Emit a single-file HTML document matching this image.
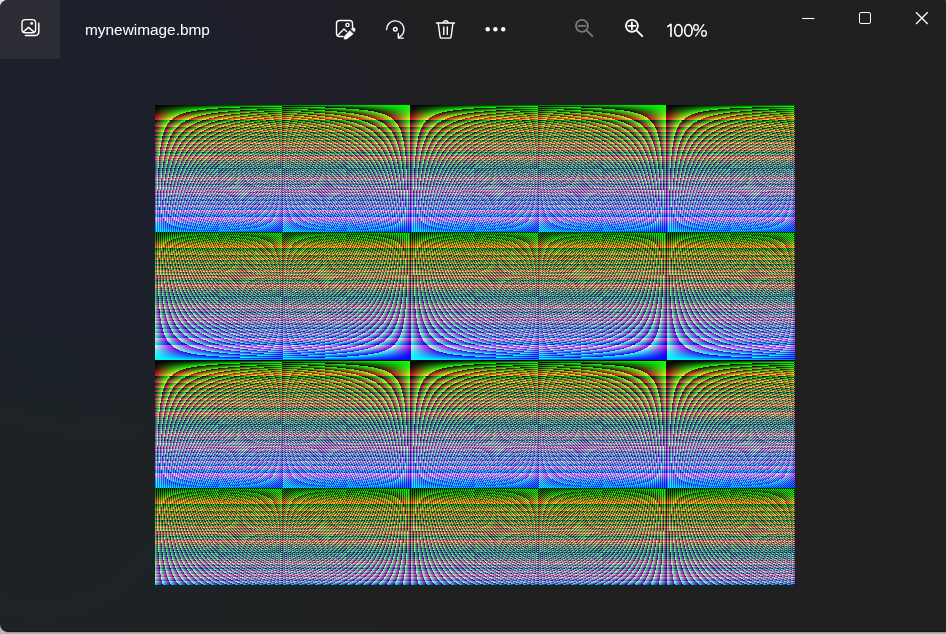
<!DOCTYPE html>
<html>
<head>
<meta charset="utf-8">
<style>
html,body{margin:0;padding:0;}
body{width:946px;height:634px;overflow:hidden;position:relative;background:#b5b5b5;font-family:"Liberation Sans",sans-serif;}
#win{position:absolute;left:0;top:0;width:952px;height:631px;border-radius:8px;overflow:hidden;border-bottom:1px solid #18191a;
  background:radial-gradient(ellipse 360px 330px at 120px 120px, rgba(24,22,78,0.21) 0%, rgba(24,22,78,0.16) 60%, rgba(24,22,78,0) 100%), radial-gradient(ellipse 400px 560px at 40px 380px, rgba(12,52,66,0.17) 0%, rgba(12,52,66,0.11) 55%, rgba(12,52,66,0) 100%), #202020;}
#shadowline{position:absolute;left:6px;top:632px;width:946px;height:1px;background:#9c9c9c;}
#btn{position:absolute;left:0;top:0;width:60px;height:59px;background:#2c2d34;}
#title{position:absolute;left:85px;top:20px;font-size:15.4px;will-change:transform;color:#fff;white-space:nowrap;line-height:20px;}
#zoomtxt{position:absolute;left:666px;top:19px;font-size:18.5px;color:#fff;white-space:nowrap;line-height:24px;transform-origin:0 0;transform:scaleX(0.85);will-change:transform;}
#pat{position:absolute;left:155px;top:105px;width:640px;height:480px;}
#pat canvas{position:absolute;left:0;top:0;}
#fallback{position:absolute;left:0;top:0;width:640px;height:480px;}
#fallback i{display:block;width:640px;height:1px;background-blend-mode:lighten;}
svg{position:absolute;left:0;top:0;}
</style>
</head>
<body>
<div id="shadowline"></div>
<div style="position:absolute;left:0;top:0;width:10px;height:10px;background:#dedede"></div>
<div id="win">
  <div id="btn"></div>
  <div id="title">mynewimage.bmp</div>
    <div id="pat"><div id="fallback">
<i style="background:repeating-linear-gradient(90deg,#000 -0.88400px,#0f0 254.11600px,#0f0 255.11600px),rgb(1,0,2)"></i>
<i style="background:repeating-linear-gradient(90deg,#000 -0.69200px,#0f0 126.80800px,#0f0 127.30800px),rgb(4,0,4)"></i>
<i style="background:repeating-linear-gradient(90deg,#000 -0.62800px,#0f0 84.37200px,#0f0 84.70533px),rgb(9,0,6)"></i>
<i style="background:repeating-linear-gradient(90deg,#000 -0.59600px,#0f0 63.15400px,#0f0 63.40400px),rgb(16,0,8)"></i>
<i style="background:repeating-linear-gradient(90deg,#000 -0.57680px,#0f0 50.42320px,#0f0 50.62320px),rgb(25,0,10)"></i>
<i style="background:repeating-linear-gradient(90deg,#000 -0.56400px,#0f0 41.93600px,#0f0 42.10267px),rgb(36,0,12)"></i>
<i style="background:repeating-linear-gradient(90deg,#000 -0.55486px,#0f0 35.87371px,#0f0 36.01657px),rgb(49,0,14)"></i>
<i style="background:repeating-linear-gradient(90deg,#000 -0.54800px,#0f0 31.32700px,#0f0 31.45200px),rgb(64,0,16)"></i>
<i style="background:repeating-linear-gradient(90deg,#000 -0.54267px,#0f0 27.79067px,#0f0 27.90178px),rgb(81,0,18)"></i>
<i style="background:repeating-linear-gradient(90deg,#000 -0.53840px,#0f0 24.96160px,#0f0 25.06160px),rgb(100,0,20)"></i>
<i style="background:repeating-linear-gradient(90deg,#000 -0.53491px,#0f0 22.64691px,#0f0 22.73782px),rgb(121,0,22)"></i>
<i style="background:repeating-linear-gradient(90deg,#000 -0.53200px,#0f0 20.71800px,#0f0 20.80133px),rgb(144,0,24)"></i>
<i style="background:repeating-linear-gradient(90deg,#000 -0.52954px,#0f0 19.08585px,#0f0 19.16277px),rgb(169,0,26)"></i>
<i style="background:repeating-linear-gradient(90deg,#000 -0.52743px,#0f0 17.68686px,#0f0 17.75829px),rgb(196,0,28)"></i>
<i style="background:repeating-linear-gradient(90deg,#000 -0.52560px,#0f0 16.47440px,#0f0 16.54107px),rgb(225,0,30)"></i>
<i style="background:repeating-linear-gradient(90deg,#000 -0.52400px,#0f0 15.41350px,#0f0 15.47600px),rgb(0,0,32)"></i>
<i style="background:repeating-linear-gradient(90deg,#000 -0.52259px,#0f0 14.47741px,#0f0 14.53624px),rgb(33,0,34)"></i>
<i style="background:repeating-linear-gradient(90deg,#000 -0.52133px,#0f0 13.64533px,#0f0 13.70089px),rgb(68,0,36)"></i>
<i style="background:repeating-linear-gradient(90deg,#000 -0.52021px,#0f0 12.90084px,#0f0 12.95347px),rgb(105,0,38)"></i>
<i style="background:repeating-linear-gradient(90deg,#000 -0.51920px,#0f0 12.23080px,#0f0 12.28080px),rgb(144,0,40)"></i>
<i style="background:repeating-linear-gradient(90deg,#000 -0.51829px,#0f0 11.62457px,#0f0 11.67219px),rgb(185,0,42)"></i>
<i style="background:repeating-linear-gradient(90deg,#000 -0.51745px,#0f0 11.07345px,#0f0 11.11891px),rgb(228,0,44)"></i>
<i style="background:repeating-linear-gradient(90deg,#000 -0.51670px,#0f0 10.57026px,#0f0 10.61374px),rgb(17,0,46)"></i>
<i style="background:repeating-linear-gradient(90deg,#000 -0.51600px,#0f0 10.10900px,#0f0 10.15067px),rgb(64,0,48)"></i>
<i style="background:repeating-linear-gradient(90deg,#000 -0.51536px,#0f0 9.68464px,#0f0 9.72464px),rgb(113,0,50)"></i>
<i style="background:repeating-linear-gradient(90deg,#000 -0.51477px,#0f0 9.29292px,#0f0 9.33138px),rgb(164,0,52)"></i>
<i style="background:repeating-linear-gradient(90deg,#000 -0.51422px,#0f0 8.93022px,#0f0 8.96726px),rgb(217,0,54)"></i>
<i style="background:repeating-linear-gradient(90deg,#000 -0.51371px,#0f0 8.59343px,#0f0 8.62914px),rgb(16,0,56)"></i>
<i style="background:repeating-linear-gradient(90deg,#000 -0.51324px,#0f0 8.27986px,#0f0 8.31434px),rgb(73,0,58)"></i>
<i style="background:repeating-linear-gradient(90deg,#000 -0.51280px,#0f0 7.98720px,#0f0 8.02053px),rgb(132,0,60)"></i>
<i style="background:repeating-linear-gradient(90deg,#000 -0.51239px,#0f0 7.71342px,#0f0 7.74568px),rgb(193,0,62)"></i>
<i style="background:repeating-linear-gradient(90deg,#000 -0.51200px,#0f0 7.45675px,#0f0 7.48800px),rgb(0,0,64)"></i>
<i style="background:repeating-linear-gradient(90deg,#000 -0.51164px,#0f0 7.21564px,#0f0 7.24594px),rgb(65,0,66)"></i>
<i style="background:repeating-linear-gradient(90deg,#000 -0.51129px,#0f0 6.98871px,#0f0 7.01812px),rgb(132,0,68)"></i>
<i style="background:repeating-linear-gradient(90deg,#000 -0.51097px,#0f0 6.77474px,#0f0 6.80331px),rgb(201,0,70)"></i>
<i style="background:repeating-linear-gradient(90deg,#000 -0.51067px,#0f0 6.57267px,#0f0 6.60044px),rgb(16,0,72)"></i>
<i style="background:repeating-linear-gradient(90deg,#000 -0.51038px,#0f0 6.38151px,#0f0 6.40854px),rgb(89,0,74)"></i>
<i style="background:repeating-linear-gradient(90deg,#000 -0.51011px,#0f0 6.20042px,#0f0 6.22674px),rgb(164,0,76)"></i>
<i style="background:repeating-linear-gradient(90deg,#000 -0.50985px,#0f0 6.02862px,#0f0 6.05426px),rgb(241,0,78)"></i>
<i style="background:repeating-linear-gradient(90deg,#000 -0.50960px,#0f0 5.86540px,#0f0 5.89040px),rgb(64,0,80)"></i>
<i style="background:repeating-linear-gradient(90deg,#000 -0.50937px,#0f0 5.71015px,#0f0 5.73454px),rgb(145,0,82)"></i>
<i style="background:repeating-linear-gradient(90deg,#000 -0.50914px,#0f0 5.56229px,#0f0 5.58610px),rgb(228,0,84)"></i>
<i style="background:repeating-linear-gradient(90deg,#000 -0.50893px,#0f0 5.42130px,#0f0 5.44456px),rgb(57,0,86)"></i>
<i style="background:repeating-linear-gradient(90deg,#000 -0.50873px,#0f0 5.28673px,#0f0 5.30945px),rgb(144,0,88)"></i>
<i style="background:repeating-linear-gradient(90deg,#000 -0.50853px,#0f0 5.15813px,#0f0 5.18036px),rgb(233,0,90)"></i>
<i style="background:repeating-linear-gradient(90deg,#000 -0.50835px,#0f0 5.03513px,#0f0 5.05687px),rgb(68,0,92)"></i>
<i style="background:repeating-linear-gradient(90deg,#000 -0.50817px,#0f0 4.91736px,#0f0 4.93864px),rgb(161,0,94)"></i>
<i style="background:repeating-linear-gradient(90deg,#000 -0.50800px,#0f0 4.80450px,#0f0 4.82533px),rgb(0,0,96)"></i>
<i style="background:repeating-linear-gradient(90deg,#000 -0.50784px,#0f0 4.69624px,#0f0 4.71665px),rgb(97,0,98)"></i>
<i style="background:repeating-linear-gradient(90deg,#000 -0.50768px,#0f0 4.59232px,#0f0 4.61232px),rgb(196,0,100)"></i>
<i style="background:repeating-linear-gradient(90deg,#000 -0.50753px,#0f0 4.49247px,#0f0 4.51208px),rgb(41,0,102)"></i>
<i style="background:repeating-linear-gradient(90deg,#000 -0.50738px,#0f0 4.39646px,#0f0 4.41569px),rgb(144,0,104)"></i>
<i style="background:repeating-linear-gradient(90deg,#000 -0.50725px,#0f0 4.30408px,#0f0 4.32294px),rgb(249,0,106)"></i>
<i style="background:repeating-linear-gradient(90deg,#000 -0.50711px,#0f0 4.21511px,#0f0 4.23363px),rgb(100,0,108)"></i>
<i style="background:repeating-linear-gradient(90deg,#000 -0.50698px,#0f0 4.12938px,#0f0 4.14756px),rgb(209,0,110)"></i>
<i style="background:repeating-linear-gradient(90deg,#000 -0.50686px,#0f0 4.04671px,#0f0 4.06457px),rgb(64,0,112)"></i>
<i style="background:repeating-linear-gradient(90deg,#000 -0.50674px,#0f0 3.96695px,#0f0 3.98449px),rgb(177,0,114)"></i>
<i style="background:repeating-linear-gradient(90deg,#000 -0.50662px,#0f0 3.88993px,#0f0 3.90717px),rgb(36,0,116)"></i>
<i style="background:repeating-linear-gradient(90deg,#000 -0.50651px,#0f0 3.81553px,#0f0 3.83247px),rgb(153,0,118)"></i>
<i style="background:repeating-linear-gradient(90deg,#000 -0.50640px,#0f0 3.74360px,#0f0 3.76027px),rgb(16,0,120)"></i>
<i style="background:repeating-linear-gradient(90deg,#000 -0.50630px,#0f0 3.67403px,#0f0 3.69043px),rgb(137,0,122)"></i>
<i style="background:repeating-linear-gradient(90deg,#000 -0.50619px,#0f0 3.60671px,#0f0 3.62284px),rgb(4,0,124)"></i>
<i style="background:repeating-linear-gradient(90deg,#000 -0.50610px,#0f0 3.54152px,#0f0 3.55740px),rgb(129,0,126)"></i>
<i style="background:repeating-linear-gradient(90deg,#000 -0.50600px,#0f0 3.47837px,#0f0 3.49400px),rgb(0,0,128)"></i>
<i style="background:repeating-linear-gradient(90deg,#000 -0.50591px,#0f0 3.41717px,#0f0 3.43255px),rgb(129,0,130)"></i>
<i style="background:repeating-linear-gradient(90deg,#000 -0.50582px,#0f0 3.35782px,#0f0 3.37297px),rgb(4,0,132)"></i>
<i style="background:repeating-linear-gradient(90deg,#000 -0.50573px,#0f0 3.30024px,#0f0 3.31516px),rgb(137,0,134)"></i>
<i style="background:repeating-linear-gradient(90deg,#000 -0.50565px,#0f0 3.24435px,#0f0 3.25906px),rgb(16,0,136)"></i>
<i style="background:repeating-linear-gradient(90deg,#000 -0.50557px,#0f0 3.19009px,#0f0 3.20458px),rgb(153,0,138)"></i>
<i style="background:repeating-linear-gradient(90deg,#000 -0.50549px,#0f0 3.13737px,#0f0 3.15166px),rgb(36,0,140)"></i>
<i style="background:repeating-linear-gradient(90deg,#000 -0.50541px,#0f0 3.08614px,#0f0 3.10023px),rgb(177,0,142)"></i>
<i style="background:repeating-linear-gradient(90deg,#000 -0.50533px,#0f0 3.03633px,#0f0 3.05022px),rgb(64,0,144)"></i>
<i style="background:repeating-linear-gradient(90deg,#000 -0.50526px,#0f0 2.98789px,#0f0 3.00159px),rgb(209,0,146)"></i>
<i style="background:repeating-linear-gradient(90deg,#000 -0.50519px,#0f0 2.94076px,#0f0 2.95427px),rgb(100,0,148)"></i>
<i style="background:repeating-linear-gradient(90deg,#000 -0.50512px,#0f0 2.89488px,#0f0 2.90821px),rgb(249,0,150)"></i>
<i style="background:repeating-linear-gradient(90deg,#000 -0.50505px,#0f0 2.85021px,#0f0 2.86337px),rgb(144,0,152)"></i>
<i style="background:repeating-linear-gradient(90deg,#000 -0.50499px,#0f0 2.80670px,#0f0 2.81969px),rgb(41,0,154)"></i>
<i style="background:repeating-linear-gradient(90deg,#000 -0.50492px,#0f0 2.76431px,#0f0 2.77713px),rgb(196,0,156)"></i>
<i style="background:repeating-linear-gradient(90deg,#000 -0.50486px,#0f0 2.72299px,#0f0 2.73565px),rgb(97,0,158)"></i>
<i style="background:repeating-linear-gradient(90deg,#000 -0.50480px,#0f0 2.68270px,#0f0 2.69520px),rgb(0,0,160)"></i>
<i style="background:repeating-linear-gradient(90deg,#000 -0.50474px,#0f0 2.64341px,#0f0 2.65575px),rgb(161,0,162)"></i>
<i style="background:repeating-linear-gradient(90deg,#000 -0.50468px,#0f0 2.60507px,#0f0 2.61727px),rgb(68,0,164)"></i>
<i style="background:repeating-linear-gradient(90deg,#000 -0.50463px,#0f0 2.56766px,#0f0 2.57971px),rgb(233,0,166)"></i>
<i style="background:repeating-linear-gradient(90deg,#000 -0.50457px,#0f0 2.53114px,#0f0 2.54305px),rgb(144,0,168)"></i>
<i style="background:repeating-linear-gradient(90deg,#000 -0.50452px,#0f0 2.49548px,#0f0 2.50725px),rgb(57,0,170)"></i>
<i style="background:repeating-linear-gradient(90deg,#000 -0.50447px,#0f0 2.46065px,#0f0 2.47228px),rgb(228,0,172)"></i>
<i style="background:repeating-linear-gradient(90deg,#000 -0.50441px,#0f0 2.42662px,#0f0 2.43811px),rgb(145,0,174)"></i>
<i style="background:repeating-linear-gradient(90deg,#000 -0.50436px,#0f0 2.39336px,#0f0 2.40473px),rgb(64,0,176)"></i>
<i style="background:repeating-linear-gradient(90deg,#000 -0.50431px,#0f0 2.36085px,#0f0 2.37209px),rgb(241,0,178)"></i>
<i style="background:repeating-linear-gradient(90deg,#000 -0.50427px,#0f0 2.32907px,#0f0 2.34018px),rgb(164,0,180)"></i>
<i style="background:repeating-linear-gradient(90deg,#000 -0.50422px,#0f0 2.29798px,#0f0 2.30897px),rgb(89,0,182)"></i>
<i style="background:repeating-linear-gradient(90deg,#000 -0.50417px,#0f0 2.26757px,#0f0 2.27843px),rgb(16,0,184)"></i>
<i style="background:repeating-linear-gradient(90deg,#000 -0.50413px,#0f0 2.23781px,#0f0 2.24856px),rgb(201,0,186)"></i>
<i style="background:repeating-linear-gradient(90deg,#000 -0.50409px,#0f0 2.20868px,#0f0 2.21932px),rgb(132,0,188)"></i>
<i style="background:repeating-linear-gradient(90deg,#000 -0.50404px,#0f0 2.18017px,#0f0 2.19069px),rgb(65,0,190)"></i>
<i style="background:repeating-linear-gradient(90deg,#000 -0.50400px,#0f0 2.15225px,#0f0 2.16267px),rgb(0,0,192)"></i>
<i style="background:repeating-linear-gradient(90deg,#000 -0.50396px,#0f0 2.12491px,#0f0 2.13522px),rgb(193,0,194)"></i>
<i style="background:repeating-linear-gradient(90deg,#000 -0.50392px,#0f0 2.09812px,#0f0 2.10833px),rgb(132,0,196)"></i>
<i style="background:repeating-linear-gradient(90deg,#000 -0.50388px,#0f0 2.07188px,#0f0 2.08198px),rgb(73,0,198)"></i>
<i style="background:repeating-linear-gradient(90deg,#000 -0.50384px,#0f0 2.04616px,#0f0 2.05616px),rgb(16,0,200)"></i>
<i style="background:repeating-linear-gradient(90deg,#000 -0.50380px,#0f0 2.02095px,#0f0 2.03085px),rgb(217,0,202)"></i>
<i style="background:repeating-linear-gradient(90deg,#000 -0.50376px,#0f0 1.99624px,#0f0 2.00604px),rgb(164,0,204)"></i>
<i style="background:repeating-linear-gradient(90deg,#000 -0.50373px,#0f0 1.97200px,#0f0 1.98171px),rgb(113,0,206)"></i>
<i style="background:repeating-linear-gradient(90deg,#000 -0.50369px,#0f0 1.94823px,#0f0 1.95785px),rgb(64,0,208)"></i>
<i style="background:repeating-linear-gradient(90deg,#000 -0.50366px,#0f0 1.92491px,#0f0 1.93444px),rgb(17,0,210)"></i>
<i style="background:repeating-linear-gradient(90deg,#000 -0.50362px,#0f0 1.90204px,#0f0 1.91147px),rgb(228,0,212)"></i>
<i style="background:repeating-linear-gradient(90deg,#000 -0.50359px,#0f0 1.87959px,#0f0 1.88893px),rgb(185,0,214)"></i>
<i style="background:repeating-linear-gradient(90deg,#000 -0.50356px,#0f0 1.85756px,#0f0 1.86681px),rgb(144,0,216)"></i>
<i style="background:repeating-linear-gradient(90deg,#000 -0.50352px,#0f0 1.83593px,#0f0 1.84510px),rgb(105,0,218)"></i>
<i style="background:repeating-linear-gradient(90deg,#000 -0.50349px,#0f0 1.81469px,#0f0 1.82378px),rgb(68,0,220)"></i>
<i style="background:repeating-linear-gradient(90deg,#000 -0.50346px,#0f0 1.79384px,#0f0 1.80285px),rgb(33,0,222)"></i>
<i style="background:repeating-linear-gradient(90deg,#000 -0.50343px,#0f0 1.77336px,#0f0 1.78229px),rgb(0,0,224)"></i>
<i style="background:repeating-linear-gradient(90deg,#000 -0.50340px,#0f0 1.75324px,#0f0 1.76209px),rgb(225,0,226)"></i>
<i style="background:repeating-linear-gradient(90deg,#000 -0.50337px,#0f0 1.73347px,#0f0 1.74225px),rgb(196,0,228)"></i>
<i style="background:repeating-linear-gradient(90deg,#000 -0.50334px,#0f0 1.71405px,#0f0 1.72275px),rgb(169,0,230)"></i>
<i style="background:repeating-linear-gradient(90deg,#000 -0.50331px,#0f0 1.69497px,#0f0 1.70359px),rgb(144,0,232)"></i>
<i style="background:repeating-linear-gradient(90deg,#000 -0.50328px,#0f0 1.67621px,#0f0 1.68475px),rgb(121,0,234)"></i>
<i style="background:repeating-linear-gradient(90deg,#000 -0.50325px,#0f0 1.65776px,#0f0 1.66624px),rgb(100,0,236)"></i>
<i style="background:repeating-linear-gradient(90deg,#000 -0.50323px,#0f0 1.63963px,#0f0 1.64803px),rgb(81,0,238)"></i>
<i style="background:repeating-linear-gradient(90deg,#000 -0.50320px,#0f0 1.62180px,#0f0 1.63013px),rgb(64,0,240)"></i>
<i style="background:repeating-linear-gradient(90deg,#000 -0.50317px,#0f0 1.60426px,#0f0 1.61253px),rgb(49,0,242)"></i>
<i style="background:repeating-linear-gradient(90deg,#000 -0.50315px,#0f0 1.58702px,#0f0 1.59521px),rgb(36,0,244)"></i>
<i style="background:repeating-linear-gradient(90deg,#000 -0.50312px,#0f0 1.57005px,#0f0 1.57818px),rgb(25,0,246)"></i>
<i style="background:repeating-linear-gradient(90deg,#000 -0.50310px,#0f0 1.55335px,#0f0 1.56142px),rgb(16,0,248)"></i>
<i style="background:repeating-linear-gradient(90deg,#000 -0.50307px,#0f0 1.53693px,#0f0 1.54493px),rgb(9,0,250)"></i>
<i style="background:repeating-linear-gradient(90deg,#000 -0.50305px,#0f0 1.52076px,#0f0 1.52870px),rgb(4,0,252)"></i>
<i style="background:repeating-linear-gradient(90deg,#000 -0.50302px,#0f0 1.50485px,#0f0 1.51272px),rgb(1,0,254)"></i>
<i style="background:repeating-linear-gradient(90deg,#000 -0.50300px,#0f0 1.48919px,#0f0 1.49700px),rgb(0,0,0)"></i>
<i style="background:repeating-linear-gradient(90deg,#000 -0.50298px,#0f0 1.47377px,#0f0 1.48152px),rgb(1,0,2)"></i>
<i style="background:repeating-linear-gradient(90deg,#000 -0.50295px,#0f0 1.45858px,#0f0 1.46628px),rgb(4,0,4)"></i>
<i style="background:repeating-linear-gradient(90deg,#000 -0.50293px,#0f0 1.44363px,#0f0 1.45127px),rgb(9,0,6)"></i>
<i style="background:repeating-linear-gradient(90deg,#000 -0.50291px,#0f0 1.42891px,#0f0 1.43648px),rgb(16,0,8)"></i>
<i style="background:repeating-linear-gradient(90deg,#000 -0.50289px,#0f0 1.41441px,#0f0 1.42192px),rgb(25,0,10)"></i>
<i style="background:repeating-linear-gradient(90deg,#000 -0.50287px,#0f0 1.40012px,#0f0 1.40758px),rgb(36,0,12)"></i>
<i style="background:repeating-linear-gradient(90deg,#000 -0.50284px,#0f0 1.38604px,#0f0 1.39345px),rgb(49,0,14)"></i>
<i style="background:repeating-linear-gradient(90deg,#000 -0.50282px,#0f0 1.37218px,#0f0 1.37953px),rgb(64,0,16)"></i>
<i style="background:repeating-linear-gradient(90deg,#000 -0.50280px,#0f0 1.35851px,#0f0 1.36581px),rgb(81,0,18)"></i>
<i style="background:repeating-linear-gradient(90deg,#000 -0.50278px,#0f0 1.34504px,#0f0 1.35229px),rgb(100,0,20)"></i>
<i style="background:repeating-linear-gradient(90deg,#000 -0.50276px,#0f0 1.33177px,#0f0 1.33896px),rgb(121,0,22)"></i>
<i style="background:repeating-linear-gradient(90deg,#000 -0.50274px,#0f0 1.31869px,#0f0 1.32583px),rgb(144,0,24)"></i>
<i style="background:repeating-linear-gradient(90deg,#000 -0.50272px,#0f0 1.30579px,#0f0 1.31288px),rgb(169,0,26)"></i>
<i style="background:repeating-linear-gradient(90deg,#000 -0.50270px,#0f0 1.29307px,#0f0 1.30011px),rgb(196,0,28)"></i>
<i style="background:repeating-linear-gradient(90deg,#000 -0.50269px,#0f0 1.28053px,#0f0 1.28752px),rgb(225,0,30)"></i>
<i style="background:repeating-linear-gradient(90deg,#000 -0.50267px,#0f0 1.26817px,#0f0 1.27511px),rgb(0,0,32)"></i>
<i style="background:repeating-linear-gradient(90deg,#000 -0.50265px,#0f0 1.25597px,#0f0 1.26287px),rgb(33,0,34)"></i>
<i style="background:repeating-linear-gradient(90deg,#000 -0.50263px,#0f0 1.24395px,#0f0 1.25079px),rgb(68,0,36)"></i>
<i style="background:repeating-linear-gradient(90deg,#000 -0.50261px,#0f0 1.23208px,#0f0 1.23888px),rgb(105,0,38)"></i>
<i style="background:repeating-linear-gradient(90deg,#000 -0.50259px,#0f0 1.22038px,#0f0 1.22714px),rgb(144,0,40)"></i>
<i style="background:repeating-linear-gradient(90deg,#000 -0.50258px,#0f0 1.20883px,#0f0 1.21554px),rgb(185,0,42)"></i>
<i style="background:repeating-linear-gradient(90deg,#000 -0.50256px,#0f0 1.19744px,#0f0 1.20411px),rgb(228,0,44)"></i>
<i style="background:repeating-linear-gradient(90deg,#000 -0.50254px,#0f0 1.18620px,#0f0 1.19282px),rgb(17,0,46)"></i>
<i style="background:repeating-linear-gradient(90deg,#000 -0.50253px,#0f0 1.17511px,#0f0 1.18168px),rgb(64,0,48)"></i>
<i style="background:repeating-linear-gradient(90deg,#000 -0.50251px,#0f0 1.16416px,#0f0 1.17069px),rgb(113,0,50)"></i>
<i style="background:repeating-linear-gradient(90deg,#000 -0.50249px,#0f0 1.15335px,#0f0 1.15984px),rgb(164,0,52)"></i>
<i style="background:repeating-linear-gradient(90deg,#000 -0.50248px,#0f0 1.14268px,#0f0 1.14914px),rgb(217,0,54)"></i>
<i style="background:repeating-linear-gradient(90deg,#000 -0.50246px,#0f0 1.13215px,#0f0 1.13856px),rgb(16,0,56)"></i>
<i style="background:repeating-linear-gradient(90deg,#000 -0.50245px,#0f0 1.12176px,#0f0 1.12813px),rgb(73,0,58)"></i>
<i style="background:repeating-linear-gradient(90deg,#000 -0.50243px,#0f0 1.11149px,#0f0 1.11782px),rgb(132,0,60)"></i>
<i style="background:repeating-linear-gradient(90deg,#000 -0.50242px,#0f0 1.10136px,#0f0 1.10765px),rgb(193,0,62)"></i>
<i style="background:repeating-linear-gradient(90deg,#000 -0.50240px,#0f0 1.09135px,#0f0 1.09760px),rgb(0,0,64)"></i>
<i style="background:repeating-linear-gradient(90deg,#000 -0.50239px,#0f0 1.08147px,#0f0 1.08768px),rgb(65,0,66)"></i>
<i style="background:repeating-linear-gradient(90deg,#000 -0.50237px,#0f0 1.07170px,#0f0 1.07788px),rgb(132,0,68)"></i>
<i style="background:repeating-linear-gradient(90deg,#000 -0.50236px,#0f0 1.06206px,#0f0 1.06820px),rgb(201,0,70)"></i>
<i style="background:repeating-linear-gradient(90deg,#000 -0.50234px,#0f0 1.05254px,#0f0 1.05863px),rgb(16,0,72)"></i>
<i style="background:repeating-linear-gradient(90deg,#000 -0.50233px,#0f0 1.04313px,#0f0 1.04919px),rgb(89,0,74)"></i>
<i style="background:repeating-linear-gradient(90deg,#000 -0.50231px,#0f0 1.03383px,#0f0 1.03986px),rgb(164,0,76)"></i>
<i style="background:repeating-linear-gradient(90deg,#000 -0.50230px,#0f0 1.02465px,#0f0 1.03063px),rgb(241,0,78)"></i>
<i style="background:repeating-linear-gradient(90deg,#000 -0.50229px,#0f0 1.01557px,#0f0 1.02152px),rgb(64,0,80)"></i>
<i style="background:repeating-linear-gradient(90deg,#000 -0.50227px,#0f0 1.00660px,#0f0 1.01252px),rgb(145,0,82)"></i>
<i style="background:repeating-linear-gradient(90deg,#000 -0.50226px,#0f0 0.99774px,#0f0 1.00362px),rgb(228,0,84)"></i>
<i style="background:repeating-linear-gradient(90deg,#000 -0.50225px,#0f0 0.98898px,#0f0 0.99483px),rgb(57,0,86)"></i>
<i style="background:repeating-linear-gradient(90deg,#000 -0.50223px,#0f0 0.98033px,#0f0 0.98614px),rgb(144,0,88)"></i>
<i style="background:repeating-linear-gradient(90deg,#000 -0.50222px,#0f0 0.97177px,#0f0 0.97755px),rgb(233,0,90)"></i>
<i style="background:repeating-linear-gradient(90deg,#000 -0.50221px,#0f0 0.96331px,#0f0 0.96906px),rgb(68,0,92)"></i>
<i style="background:repeating-linear-gradient(90deg,#000 -0.50219px,#0f0 0.95495px,#0f0 0.96066px),rgb(161,0,94)"></i>
<i style="background:repeating-linear-gradient(90deg,#000 -0.50218px,#0f0 0.94668px,#0f0 0.95236px),rgb(0,0,96)"></i>
<i style="background:repeating-linear-gradient(90deg,#000 -0.50217px,#0f0 0.93851px,#0f0 0.94416px),rgb(97,0,98)"></i>
<i style="background:repeating-linear-gradient(90deg,#000 -0.50216px,#0f0 0.93043px,#0f0 0.93604px),rgb(196,0,100)"></i>
<i style="background:repeating-linear-gradient(90deg,#000 -0.50215px,#0f0 0.92244px,#0f0 0.92802px),rgb(41,0,102)"></i>
<i style="background:repeating-linear-gradient(90deg,#000 -0.50213px,#0f0 0.91453px,#0f0 0.92009px),rgb(144,0,104)"></i>
<i style="background:repeating-linear-gradient(90deg,#000 -0.50212px,#0f0 0.90672px,#0f0 0.91224px),rgb(249,0,106)"></i>
<i style="background:repeating-linear-gradient(90deg,#000 -0.50211px,#0f0 0.89899px,#0f0 0.90448px),rgb(100,0,108)"></i>
<i style="background:repeating-linear-gradient(90deg,#000 -0.50210px,#0f0 0.89134px,#0f0 0.89681px),rgb(209,0,110)"></i>
<i style="background:repeating-linear-gradient(90deg,#000 -0.50209px,#0f0 0.88378px,#0f0 0.88922px),rgb(64,0,112)"></i>
<i style="background:repeating-linear-gradient(90deg,#000 -0.50208px,#0f0 0.87630px,#0f0 0.88171px),rgb(177,0,114)"></i>
<i style="background:repeating-linear-gradient(90deg,#000 -0.50206px,#0f0 0.86890px,#0f0 0.87428px),rgb(36,0,116)"></i>
<i style="background:repeating-linear-gradient(90deg,#000 -0.50205px,#0f0 0.86158px,#0f0 0.86693px),rgb(153,0,118)"></i>
<i style="background:repeating-linear-gradient(90deg,#000 -0.50204px,#0f0 0.85434px,#0f0 0.85966px),rgb(16,0,120)"></i>
<i style="background:repeating-linear-gradient(90deg,#000 -0.50203px,#0f0 0.84717px,#0f0 0.85247px),rgb(137,0,122)"></i>
<i style="background:repeating-linear-gradient(90deg,#000 -0.50202px,#0f0 0.84008px,#0f0 0.84535px),rgb(4,0,124)"></i>
<i style="background:repeating-linear-gradient(90deg,#000 -0.50201px,#0f0 0.83307px,#0f0 0.83830px),rgb(129,0,126)"></i>
<i style="background:repeating-linear-gradient(90deg,#000 -0.50200px,#0f0 0.82612px,#0f0 0.83133px),rgb(0,0,128)"></i>
<i style="background:repeating-linear-gradient(90deg,#000 -0.50199px,#0f0 0.81925px,#0f0 0.82444px),rgb(129,0,130)"></i>
<i style="background:repeating-linear-gradient(90deg,#000 -0.50198px,#0f0 0.81245px,#0f0 0.81761px),rgb(4,0,132)"></i>
<i style="background:repeating-linear-gradient(90deg,#000 -0.50197px,#0f0 0.80572px,#0f0 0.81085px),rgb(137,0,134)"></i>
<i style="background:repeating-linear-gradient(90deg,#000 -0.50196px,#0f0 0.79906px,#0f0 0.80416px),rgb(16,0,136)"></i>
<i style="background:repeating-linear-gradient(90deg,#000 -0.50195px,#0f0 0.79247px,#0f0 0.79754px),rgb(153,0,138)"></i>
<i style="background:repeating-linear-gradient(90deg,#000 -0.50194px,#0f0 0.78594px,#0f0 0.79099px),rgb(36,0,140)"></i>
<i style="background:repeating-linear-gradient(90deg,#000 -0.50193px,#0f0 0.77948px,#0f0 0.78450px),rgb(177,0,142)"></i>
<i style="background:repeating-linear-gradient(90deg,#000 -0.50192px,#0f0 0.77308px,#0f0 0.77808px),rgb(64,0,144)"></i>
<i style="background:repeating-linear-gradient(90deg,#000 -0.50191px,#0f0 0.76675px,#0f0 0.77172px),rgb(209,0,146)"></i>
<i style="background:repeating-linear-gradient(90deg,#000 -0.50190px,#0f0 0.76048px,#0f0 0.76543px),rgb(100,0,148)"></i>
<i style="background:repeating-linear-gradient(90deg,#000 -0.50189px,#0f0 0.75427px,#0f0 0.75919px),rgb(249,0,150)"></i>
<i style="background:repeating-linear-gradient(90deg,#000 -0.50188px,#0f0 0.74812px,#0f0 0.75302px),rgb(144,0,152)"></i>
<i style="background:repeating-linear-gradient(90deg,#000 -0.50187px,#0f0 0.74203px,#0f0 0.74691px),rgb(41,0,154)"></i>
<i style="background:repeating-linear-gradient(90deg,#000 -0.50186px,#0f0 0.73600px,#0f0 0.74085px),rgb(196,0,156)"></i>
<i style="background:repeating-linear-gradient(90deg,#000 -0.50186px,#0f0 0.73003px,#0f0 0.73486px),rgb(97,0,158)"></i>
<i style="background:repeating-linear-gradient(90deg,#000 -0.50185px,#0f0 0.72412px,#0f0 0.72892px),rgb(0,0,160)"></i>
<i style="background:repeating-linear-gradient(90deg,#000 -0.50184px,#0f0 0.71826px,#0f0 0.72304px),rgb(161,0,162)"></i>
<i style="background:repeating-linear-gradient(90deg,#000 -0.50183px,#0f0 0.71246px,#0f0 0.71722px),rgb(68,0,164)"></i>
<i style="background:repeating-linear-gradient(90deg,#000 -0.50182px,#0f0 0.70671px,#0f0 0.71145px),rgb(233,0,166)"></i>
<i style="background:repeating-linear-gradient(90deg,#000 -0.50181px,#0f0 0.70102px,#0f0 0.70574px),rgb(144,0,168)"></i>
<i style="background:repeating-linear-gradient(90deg,#000 -0.50180px,#0f0 0.69538px,#0f0 0.70008px),rgb(57,0,170)"></i>
<i style="background:repeating-linear-gradient(90deg,#000 -0.50179px,#0f0 0.68979px,#0f0 0.69447px),rgb(228,0,172)"></i>
<i style="background:repeating-linear-gradient(90deg,#000 -0.50179px,#0f0 0.68426px,#0f0 0.68891px),rgb(145,0,174)"></i>
<i style="background:repeating-linear-gradient(90deg,#000 -0.50178px,#0f0 0.67878px,#0f0 0.68341px),rgb(64,0,176)"></i>
<i style="background:repeating-linear-gradient(90deg,#000 -0.50177px,#0f0 0.67335px,#0f0 0.67795px),rgb(241,0,178)"></i>
<i style="background:repeating-linear-gradient(90deg,#000 -0.50176px,#0f0 0.66796px,#0f0 0.67255px),rgb(164,0,180)"></i>
<i style="background:repeating-linear-gradient(90deg,#000 -0.50175px,#0f0 0.66263px,#0f0 0.66720px),rgb(89,0,182)"></i>
<i style="background:repeating-linear-gradient(90deg,#000 -0.50175px,#0f0 0.65735px,#0f0 0.66189px),rgb(16,0,184)"></i>
<i style="background:repeating-linear-gradient(90deg,#000 -0.50174px,#0f0 0.65211px,#0f0 0.65663px),rgb(201,0,186)"></i>
<i style="background:repeating-linear-gradient(90deg,#000 -0.50173px,#0f0 0.64692px,#0f0 0.65142px),rgb(132,0,188)"></i>
<i style="background:repeating-linear-gradient(90deg,#000 -0.50172px,#0f0 0.64178px,#0f0 0.64626px),rgb(65,0,190)"></i>
<i style="background:repeating-linear-gradient(90deg,#000 -0.50171px,#0f0 0.63668px,#0f0 0.64114px),rgb(0,0,192)"></i>
<i style="background:repeating-linear-gradient(90deg,#000 -0.50171px,#0f0 0.63163px,#0f0 0.63607px),rgb(193,0,194)"></i>
<i style="background:repeating-linear-gradient(90deg,#000 -0.50170px,#0f0 0.62662px,#0f0 0.63104px),rgb(132,0,196)"></i>
<i style="background:repeating-linear-gradient(90deg,#000 -0.50169px,#0f0 0.62166px,#0f0 0.62606px),rgb(73,0,198)"></i>
<i style="background:repeating-linear-gradient(90deg,#000 -0.50168px,#0f0 0.61674px,#0f0 0.62112px),rgb(16,0,200)"></i>
<i style="background:repeating-linear-gradient(90deg,#000 -0.50168px,#0f0 0.61186px,#0f0 0.61623px),rgb(217,0,202)"></i>
<i style="background:repeating-linear-gradient(90deg,#000 -0.50167px,#0f0 0.60703px,#0f0 0.61137px),rgb(164,0,204)"></i>
<i style="background:repeating-linear-gradient(90deg,#000 -0.50166px,#0f0 0.60223px,#0f0 0.60656px),rgb(113,0,206)"></i>
<i style="background:repeating-linear-gradient(90deg,#000 -0.50166px,#0f0 0.59748px,#0f0 0.60179px),rgb(64,0,208)"></i>
<i style="background:repeating-linear-gradient(90deg,#000 -0.50165px,#0f0 0.59277px,#0f0 0.59706px),rgb(17,0,210)"></i>
<i style="background:repeating-linear-gradient(90deg,#000 -0.50164px,#0f0 0.58810px,#0f0 0.59238px),rgb(228,0,212)"></i>
<i style="background:repeating-linear-gradient(90deg,#000 -0.50163px,#0f0 0.58347px,#0f0 0.58773px),rgb(185,0,214)"></i>
<i style="background:repeating-linear-gradient(90deg,#000 -0.50163px,#0f0 0.57888px,#0f0 0.58312px),rgb(144,0,216)"></i>
<i style="background:repeating-linear-gradient(90deg,#000 -0.50162px,#0f0 0.57433px,#0f0 0.57855px),rgb(105,0,218)"></i>
<i style="background:repeating-linear-gradient(90deg,#000 -0.50161px,#0f0 0.56982px,#0f0 0.57402px),rgb(68,0,220)"></i>
<i style="background:repeating-linear-gradient(90deg,#000 -0.50161px,#0f0 0.56534px,#0f0 0.56952px),rgb(33,0,222)"></i>
<i style="background:repeating-linear-gradient(90deg,#000 -0.50160px,#0f0 0.56090px,#0f0 0.56507px),rgb(0,0,224)"></i>
<i style="background:repeating-linear-gradient(90deg,#000 -0.50159px,#0f0 0.55650px,#0f0 0.56065px),rgb(225,0,226)"></i>
<i style="background:repeating-linear-gradient(90deg,#000 -0.50159px,#0f0 0.55213px,#0f0 0.55626px),rgb(196,0,228)"></i>
<i style="background:repeating-linear-gradient(90deg,#000 -0.50158px,#0f0 0.54780px,#0f0 0.55192px),rgb(169,0,230)"></i>
<i style="background:repeating-linear-gradient(90deg,#000 -0.50157px,#0f0 0.54351px,#0f0 0.54761px),rgb(144,0,232)"></i>
<i style="background:repeating-linear-gradient(90deg,#000 -0.50157px,#0f0 0.53925px,#0f0 0.54333px),rgb(121,0,234)"></i>
<i style="background:repeating-linear-gradient(90deg,#000 -0.50156px,#0f0 0.53502px,#0f0 0.53909px),rgb(100,0,236)"></i>
<i style="background:repeating-linear-gradient(90deg,#000 -0.50155px,#0f0 0.53083px,#0f0 0.53488px),rgb(81,0,238)"></i>
<i style="background:repeating-linear-gradient(90deg,#000 -0.50155px,#0f0 0.52668px,#0f0 0.53071px),rgb(64,0,240)"></i>
<i style="background:repeating-linear-gradient(90deg,#000 -0.50154px,#0f0 0.52255px,#0f0 0.52657px),rgb(49,0,242)"></i>
<i style="background:repeating-linear-gradient(90deg,#000 -0.50154px,#0f0 0.51846px,#0f0 0.52246px),rgb(36,0,244)"></i>
<i style="background:repeating-linear-gradient(90deg,#000 -0.50153px,#0f0 0.51441px,#0f0 0.51839px),rgb(25,0,246)"></i>
<i style="background:repeating-linear-gradient(90deg,#000 -0.50152px,#0f0 0.51038px,#0f0 0.51435px),rgb(16,0,248)"></i>
<i style="background:repeating-linear-gradient(90deg,#000 -0.50152px,#0f0 0.50639px,#0f0 0.51034px),rgb(9,0,250)"></i>
<i style="background:repeating-linear-gradient(90deg,#000 -0.50151px,#0f0 0.50243px,#0f0 0.50636px),rgb(4,0,252)"></i>
<i style="background:repeating-linear-gradient(90deg,#000 -0.50151px,#0f0 0.49849px,#0f0 0.50242px),rgb(1,0,254)"></i>
<i style="background:rgb(0,0,0)"></i>
<i style="background:repeating-linear-gradient(90deg,#000 -0.88400px,#0f0 254.11600px,#0f0 255.11600px),rgb(1,0,2)"></i>
<i style="background:repeating-linear-gradient(90deg,#000 -0.69200px,#0f0 126.80800px,#0f0 127.30800px),rgb(4,0,4)"></i>
<i style="background:repeating-linear-gradient(90deg,#000 -0.62800px,#0f0 84.37200px,#0f0 84.70533px),rgb(9,0,6)"></i>
<i style="background:repeating-linear-gradient(90deg,#000 -0.59600px,#0f0 63.15400px,#0f0 63.40400px),rgb(16,0,8)"></i>
<i style="background:repeating-linear-gradient(90deg,#000 -0.57680px,#0f0 50.42320px,#0f0 50.62320px),rgb(25,0,10)"></i>
<i style="background:repeating-linear-gradient(90deg,#000 -0.56400px,#0f0 41.93600px,#0f0 42.10267px),rgb(36,0,12)"></i>
<i style="background:repeating-linear-gradient(90deg,#000 -0.55486px,#0f0 35.87371px,#0f0 36.01657px),rgb(49,0,14)"></i>
<i style="background:repeating-linear-gradient(90deg,#000 -0.54800px,#0f0 31.32700px,#0f0 31.45200px),rgb(64,0,16)"></i>
<i style="background:repeating-linear-gradient(90deg,#000 -0.54267px,#0f0 27.79067px,#0f0 27.90178px),rgb(81,0,18)"></i>
<i style="background:repeating-linear-gradient(90deg,#000 -0.53840px,#0f0 24.96160px,#0f0 25.06160px),rgb(100,0,20)"></i>
<i style="background:repeating-linear-gradient(90deg,#000 -0.53491px,#0f0 22.64691px,#0f0 22.73782px),rgb(121,0,22)"></i>
<i style="background:repeating-linear-gradient(90deg,#000 -0.53200px,#0f0 20.71800px,#0f0 20.80133px),rgb(144,0,24)"></i>
<i style="background:repeating-linear-gradient(90deg,#000 -0.52954px,#0f0 19.08585px,#0f0 19.16277px),rgb(169,0,26)"></i>
<i style="background:repeating-linear-gradient(90deg,#000 -0.52743px,#0f0 17.68686px,#0f0 17.75829px),rgb(196,0,28)"></i>
<i style="background:repeating-linear-gradient(90deg,#000 -0.52560px,#0f0 16.47440px,#0f0 16.54107px),rgb(225,0,30)"></i>
<i style="background:repeating-linear-gradient(90deg,#000 -0.52400px,#0f0 15.41350px,#0f0 15.47600px),rgb(0,0,32)"></i>
<i style="background:repeating-linear-gradient(90deg,#000 -0.52259px,#0f0 14.47741px,#0f0 14.53624px),rgb(33,0,34)"></i>
<i style="background:repeating-linear-gradient(90deg,#000 -0.52133px,#0f0 13.64533px,#0f0 13.70089px),rgb(68,0,36)"></i>
<i style="background:repeating-linear-gradient(90deg,#000 -0.52021px,#0f0 12.90084px,#0f0 12.95347px),rgb(105,0,38)"></i>
<i style="background:repeating-linear-gradient(90deg,#000 -0.51920px,#0f0 12.23080px,#0f0 12.28080px),rgb(144,0,40)"></i>
<i style="background:repeating-linear-gradient(90deg,#000 -0.51829px,#0f0 11.62457px,#0f0 11.67219px),rgb(185,0,42)"></i>
<i style="background:repeating-linear-gradient(90deg,#000 -0.51745px,#0f0 11.07345px,#0f0 11.11891px),rgb(228,0,44)"></i>
<i style="background:repeating-linear-gradient(90deg,#000 -0.51670px,#0f0 10.57026px,#0f0 10.61374px),rgb(17,0,46)"></i>
<i style="background:repeating-linear-gradient(90deg,#000 -0.51600px,#0f0 10.10900px,#0f0 10.15067px),rgb(64,0,48)"></i>
<i style="background:repeating-linear-gradient(90deg,#000 -0.51536px,#0f0 9.68464px,#0f0 9.72464px),rgb(113,0,50)"></i>
<i style="background:repeating-linear-gradient(90deg,#000 -0.51477px,#0f0 9.29292px,#0f0 9.33138px),rgb(164,0,52)"></i>
<i style="background:repeating-linear-gradient(90deg,#000 -0.51422px,#0f0 8.93022px,#0f0 8.96726px),rgb(217,0,54)"></i>
<i style="background:repeating-linear-gradient(90deg,#000 -0.51371px,#0f0 8.59343px,#0f0 8.62914px),rgb(16,0,56)"></i>
<i style="background:repeating-linear-gradient(90deg,#000 -0.51324px,#0f0 8.27986px,#0f0 8.31434px),rgb(73,0,58)"></i>
<i style="background:repeating-linear-gradient(90deg,#000 -0.51280px,#0f0 7.98720px,#0f0 8.02053px),rgb(132,0,60)"></i>
<i style="background:repeating-linear-gradient(90deg,#000 -0.51239px,#0f0 7.71342px,#0f0 7.74568px),rgb(193,0,62)"></i>
<i style="background:repeating-linear-gradient(90deg,#000 -0.51200px,#0f0 7.45675px,#0f0 7.48800px),rgb(0,0,64)"></i>
<i style="background:repeating-linear-gradient(90deg,#000 -0.51164px,#0f0 7.21564px,#0f0 7.24594px),rgb(65,0,66)"></i>
<i style="background:repeating-linear-gradient(90deg,#000 -0.51129px,#0f0 6.98871px,#0f0 7.01812px),rgb(132,0,68)"></i>
<i style="background:repeating-linear-gradient(90deg,#000 -0.51097px,#0f0 6.77474px,#0f0 6.80331px),rgb(201,0,70)"></i>
<i style="background:repeating-linear-gradient(90deg,#000 -0.51067px,#0f0 6.57267px,#0f0 6.60044px),rgb(16,0,72)"></i>
<i style="background:repeating-linear-gradient(90deg,#000 -0.51038px,#0f0 6.38151px,#0f0 6.40854px),rgb(89,0,74)"></i>
<i style="background:repeating-linear-gradient(90deg,#000 -0.51011px,#0f0 6.20042px,#0f0 6.22674px),rgb(164,0,76)"></i>
<i style="background:repeating-linear-gradient(90deg,#000 -0.50985px,#0f0 6.02862px,#0f0 6.05426px),rgb(241,0,78)"></i>
<i style="background:repeating-linear-gradient(90deg,#000 -0.50960px,#0f0 5.86540px,#0f0 5.89040px),rgb(64,0,80)"></i>
<i style="background:repeating-linear-gradient(90deg,#000 -0.50937px,#0f0 5.71015px,#0f0 5.73454px),rgb(145,0,82)"></i>
<i style="background:repeating-linear-gradient(90deg,#000 -0.50914px,#0f0 5.56229px,#0f0 5.58610px),rgb(228,0,84)"></i>
<i style="background:repeating-linear-gradient(90deg,#000 -0.50893px,#0f0 5.42130px,#0f0 5.44456px),rgb(57,0,86)"></i>
<i style="background:repeating-linear-gradient(90deg,#000 -0.50873px,#0f0 5.28673px,#0f0 5.30945px),rgb(144,0,88)"></i>
<i style="background:repeating-linear-gradient(90deg,#000 -0.50853px,#0f0 5.15813px,#0f0 5.18036px),rgb(233,0,90)"></i>
<i style="background:repeating-linear-gradient(90deg,#000 -0.50835px,#0f0 5.03513px,#0f0 5.05687px),rgb(68,0,92)"></i>
<i style="background:repeating-linear-gradient(90deg,#000 -0.50817px,#0f0 4.91736px,#0f0 4.93864px),rgb(161,0,94)"></i>
<i style="background:repeating-linear-gradient(90deg,#000 -0.50800px,#0f0 4.80450px,#0f0 4.82533px),rgb(0,0,96)"></i>
<i style="background:repeating-linear-gradient(90deg,#000 -0.50784px,#0f0 4.69624px,#0f0 4.71665px),rgb(97,0,98)"></i>
<i style="background:repeating-linear-gradient(90deg,#000 -0.50768px,#0f0 4.59232px,#0f0 4.61232px),rgb(196,0,100)"></i>
<i style="background:repeating-linear-gradient(90deg,#000 -0.50753px,#0f0 4.49247px,#0f0 4.51208px),rgb(41,0,102)"></i>
<i style="background:repeating-linear-gradient(90deg,#000 -0.50738px,#0f0 4.39646px,#0f0 4.41569px),rgb(144,0,104)"></i>
<i style="background:repeating-linear-gradient(90deg,#000 -0.50725px,#0f0 4.30408px,#0f0 4.32294px),rgb(249,0,106)"></i>
<i style="background:repeating-linear-gradient(90deg,#000 -0.50711px,#0f0 4.21511px,#0f0 4.23363px),rgb(100,0,108)"></i>
<i style="background:repeating-linear-gradient(90deg,#000 -0.50698px,#0f0 4.12938px,#0f0 4.14756px),rgb(209,0,110)"></i>
<i style="background:repeating-linear-gradient(90deg,#000 -0.50686px,#0f0 4.04671px,#0f0 4.06457px),rgb(64,0,112)"></i>
<i style="background:repeating-linear-gradient(90deg,#000 -0.50674px,#0f0 3.96695px,#0f0 3.98449px),rgb(177,0,114)"></i>
<i style="background:repeating-linear-gradient(90deg,#000 -0.50662px,#0f0 3.88993px,#0f0 3.90717px),rgb(36,0,116)"></i>
<i style="background:repeating-linear-gradient(90deg,#000 -0.50651px,#0f0 3.81553px,#0f0 3.83247px),rgb(153,0,118)"></i>
<i style="background:repeating-linear-gradient(90deg,#000 -0.50640px,#0f0 3.74360px,#0f0 3.76027px),rgb(16,0,120)"></i>
<i style="background:repeating-linear-gradient(90deg,#000 -0.50630px,#0f0 3.67403px,#0f0 3.69043px),rgb(137,0,122)"></i>
<i style="background:repeating-linear-gradient(90deg,#000 -0.50619px,#0f0 3.60671px,#0f0 3.62284px),rgb(4,0,124)"></i>
<i style="background:repeating-linear-gradient(90deg,#000 -0.50610px,#0f0 3.54152px,#0f0 3.55740px),rgb(129,0,126)"></i>
<i style="background:repeating-linear-gradient(90deg,#000 -0.50600px,#0f0 3.47837px,#0f0 3.49400px),rgb(0,0,128)"></i>
<i style="background:repeating-linear-gradient(90deg,#000 -0.50591px,#0f0 3.41717px,#0f0 3.43255px),rgb(129,0,130)"></i>
<i style="background:repeating-linear-gradient(90deg,#000 -0.50582px,#0f0 3.35782px,#0f0 3.37297px),rgb(4,0,132)"></i>
<i style="background:repeating-linear-gradient(90deg,#000 -0.50573px,#0f0 3.30024px,#0f0 3.31516px),rgb(137,0,134)"></i>
<i style="background:repeating-linear-gradient(90deg,#000 -0.50565px,#0f0 3.24435px,#0f0 3.25906px),rgb(16,0,136)"></i>
<i style="background:repeating-linear-gradient(90deg,#000 -0.50557px,#0f0 3.19009px,#0f0 3.20458px),rgb(153,0,138)"></i>
<i style="background:repeating-linear-gradient(90deg,#000 -0.50549px,#0f0 3.13737px,#0f0 3.15166px),rgb(36,0,140)"></i>
<i style="background:repeating-linear-gradient(90deg,#000 -0.50541px,#0f0 3.08614px,#0f0 3.10023px),rgb(177,0,142)"></i>
<i style="background:repeating-linear-gradient(90deg,#000 -0.50533px,#0f0 3.03633px,#0f0 3.05022px),rgb(64,0,144)"></i>
<i style="background:repeating-linear-gradient(90deg,#000 -0.50526px,#0f0 2.98789px,#0f0 3.00159px),rgb(209,0,146)"></i>
<i style="background:repeating-linear-gradient(90deg,#000 -0.50519px,#0f0 2.94076px,#0f0 2.95427px),rgb(100,0,148)"></i>
<i style="background:repeating-linear-gradient(90deg,#000 -0.50512px,#0f0 2.89488px,#0f0 2.90821px),rgb(249,0,150)"></i>
<i style="background:repeating-linear-gradient(90deg,#000 -0.50505px,#0f0 2.85021px,#0f0 2.86337px),rgb(144,0,152)"></i>
<i style="background:repeating-linear-gradient(90deg,#000 -0.50499px,#0f0 2.80670px,#0f0 2.81969px),rgb(41,0,154)"></i>
<i style="background:repeating-linear-gradient(90deg,#000 -0.50492px,#0f0 2.76431px,#0f0 2.77713px),rgb(196,0,156)"></i>
<i style="background:repeating-linear-gradient(90deg,#000 -0.50486px,#0f0 2.72299px,#0f0 2.73565px),rgb(97,0,158)"></i>
<i style="background:repeating-linear-gradient(90deg,#000 -0.50480px,#0f0 2.68270px,#0f0 2.69520px),rgb(0,0,160)"></i>
<i style="background:repeating-linear-gradient(90deg,#000 -0.50474px,#0f0 2.64341px,#0f0 2.65575px),rgb(161,0,162)"></i>
<i style="background:repeating-linear-gradient(90deg,#000 -0.50468px,#0f0 2.60507px,#0f0 2.61727px),rgb(68,0,164)"></i>
<i style="background:repeating-linear-gradient(90deg,#000 -0.50463px,#0f0 2.56766px,#0f0 2.57971px),rgb(233,0,166)"></i>
<i style="background:repeating-linear-gradient(90deg,#000 -0.50457px,#0f0 2.53114px,#0f0 2.54305px),rgb(144,0,168)"></i>
<i style="background:repeating-linear-gradient(90deg,#000 -0.50452px,#0f0 2.49548px,#0f0 2.50725px),rgb(57,0,170)"></i>
<i style="background:repeating-linear-gradient(90deg,#000 -0.50447px,#0f0 2.46065px,#0f0 2.47228px),rgb(228,0,172)"></i>
<i style="background:repeating-linear-gradient(90deg,#000 -0.50441px,#0f0 2.42662px,#0f0 2.43811px),rgb(145,0,174)"></i>
<i style="background:repeating-linear-gradient(90deg,#000 -0.50436px,#0f0 2.39336px,#0f0 2.40473px),rgb(64,0,176)"></i>
<i style="background:repeating-linear-gradient(90deg,#000 -0.50431px,#0f0 2.36085px,#0f0 2.37209px),rgb(241,0,178)"></i>
<i style="background:repeating-linear-gradient(90deg,#000 -0.50427px,#0f0 2.32907px,#0f0 2.34018px),rgb(164,0,180)"></i>
<i style="background:repeating-linear-gradient(90deg,#000 -0.50422px,#0f0 2.29798px,#0f0 2.30897px),rgb(89,0,182)"></i>
<i style="background:repeating-linear-gradient(90deg,#000 -0.50417px,#0f0 2.26757px,#0f0 2.27843px),rgb(16,0,184)"></i>
<i style="background:repeating-linear-gradient(90deg,#000 -0.50413px,#0f0 2.23781px,#0f0 2.24856px),rgb(201,0,186)"></i>
<i style="background:repeating-linear-gradient(90deg,#000 -0.50409px,#0f0 2.20868px,#0f0 2.21932px),rgb(132,0,188)"></i>
<i style="background:repeating-linear-gradient(90deg,#000 -0.50404px,#0f0 2.18017px,#0f0 2.19069px),rgb(65,0,190)"></i>
<i style="background:repeating-linear-gradient(90deg,#000 -0.50400px,#0f0 2.15225px,#0f0 2.16267px),rgb(0,0,192)"></i>
<i style="background:repeating-linear-gradient(90deg,#000 -0.50396px,#0f0 2.12491px,#0f0 2.13522px),rgb(193,0,194)"></i>
<i style="background:repeating-linear-gradient(90deg,#000 -0.50392px,#0f0 2.09812px,#0f0 2.10833px),rgb(132,0,196)"></i>
<i style="background:repeating-linear-gradient(90deg,#000 -0.50388px,#0f0 2.07188px,#0f0 2.08198px),rgb(73,0,198)"></i>
<i style="background:repeating-linear-gradient(90deg,#000 -0.50384px,#0f0 2.04616px,#0f0 2.05616px),rgb(16,0,200)"></i>
<i style="background:repeating-linear-gradient(90deg,#000 -0.50380px,#0f0 2.02095px,#0f0 2.03085px),rgb(217,0,202)"></i>
<i style="background:repeating-linear-gradient(90deg,#000 -0.50376px,#0f0 1.99624px,#0f0 2.00604px),rgb(164,0,204)"></i>
<i style="background:repeating-linear-gradient(90deg,#000 -0.50373px,#0f0 1.97200px,#0f0 1.98171px),rgb(113,0,206)"></i>
<i style="background:repeating-linear-gradient(90deg,#000 -0.50369px,#0f0 1.94823px,#0f0 1.95785px),rgb(64,0,208)"></i>
<i style="background:repeating-linear-gradient(90deg,#000 -0.50366px,#0f0 1.92491px,#0f0 1.93444px),rgb(17,0,210)"></i>
<i style="background:repeating-linear-gradient(90deg,#000 -0.50362px,#0f0 1.90204px,#0f0 1.91147px),rgb(228,0,212)"></i>
<i style="background:repeating-linear-gradient(90deg,#000 -0.50359px,#0f0 1.87959px,#0f0 1.88893px),rgb(185,0,214)"></i>
<i style="background:repeating-linear-gradient(90deg,#000 -0.50356px,#0f0 1.85756px,#0f0 1.86681px),rgb(144,0,216)"></i>
<i style="background:repeating-linear-gradient(90deg,#000 -0.50352px,#0f0 1.83593px,#0f0 1.84510px),rgb(105,0,218)"></i>
<i style="background:repeating-linear-gradient(90deg,#000 -0.50349px,#0f0 1.81469px,#0f0 1.82378px),rgb(68,0,220)"></i>
<i style="background:repeating-linear-gradient(90deg,#000 -0.50346px,#0f0 1.79384px,#0f0 1.80285px),rgb(33,0,222)"></i>
<i style="background:repeating-linear-gradient(90deg,#000 -0.50343px,#0f0 1.77336px,#0f0 1.78229px),rgb(0,0,224)"></i>
<i style="background:repeating-linear-gradient(90deg,#000 -0.50340px,#0f0 1.75324px,#0f0 1.76209px),rgb(225,0,226)"></i>
<i style="background:repeating-linear-gradient(90deg,#000 -0.50337px,#0f0 1.73347px,#0f0 1.74225px),rgb(196,0,228)"></i>
<i style="background:repeating-linear-gradient(90deg,#000 -0.50334px,#0f0 1.71405px,#0f0 1.72275px),rgb(169,0,230)"></i>
<i style="background:repeating-linear-gradient(90deg,#000 -0.50331px,#0f0 1.69497px,#0f0 1.70359px),rgb(144,0,232)"></i>
<i style="background:repeating-linear-gradient(90deg,#000 -0.50328px,#0f0 1.67621px,#0f0 1.68475px),rgb(121,0,234)"></i>
<i style="background:repeating-linear-gradient(90deg,#000 -0.50325px,#0f0 1.65776px,#0f0 1.66624px),rgb(100,0,236)"></i>
<i style="background:repeating-linear-gradient(90deg,#000 -0.50323px,#0f0 1.63963px,#0f0 1.64803px),rgb(81,0,238)"></i>
<i style="background:repeating-linear-gradient(90deg,#000 -0.50320px,#0f0 1.62180px,#0f0 1.63013px),rgb(64,0,240)"></i>
<i style="background:repeating-linear-gradient(90deg,#000 -0.50317px,#0f0 1.60426px,#0f0 1.61253px),rgb(49,0,242)"></i>
<i style="background:repeating-linear-gradient(90deg,#000 -0.50315px,#0f0 1.58702px,#0f0 1.59521px),rgb(36,0,244)"></i>
<i style="background:repeating-linear-gradient(90deg,#000 -0.50312px,#0f0 1.57005px,#0f0 1.57818px),rgb(25,0,246)"></i>
<i style="background:repeating-linear-gradient(90deg,#000 -0.50310px,#0f0 1.55335px,#0f0 1.56142px),rgb(16,0,248)"></i>
<i style="background:repeating-linear-gradient(90deg,#000 -0.50307px,#0f0 1.53693px,#0f0 1.54493px),rgb(9,0,250)"></i>
<i style="background:repeating-linear-gradient(90deg,#000 -0.50305px,#0f0 1.52076px,#0f0 1.52870px),rgb(4,0,252)"></i>
<i style="background:repeating-linear-gradient(90deg,#000 -0.50302px,#0f0 1.50485px,#0f0 1.51272px),rgb(1,0,254)"></i>
<i style="background:repeating-linear-gradient(90deg,#000 -0.50300px,#0f0 1.48919px,#0f0 1.49700px),rgb(0,0,0)"></i>
<i style="background:repeating-linear-gradient(90deg,#000 -0.50298px,#0f0 1.47377px,#0f0 1.48152px),rgb(1,0,2)"></i>
<i style="background:repeating-linear-gradient(90deg,#000 -0.50295px,#0f0 1.45858px,#0f0 1.46628px),rgb(4,0,4)"></i>
<i style="background:repeating-linear-gradient(90deg,#000 -0.50293px,#0f0 1.44363px,#0f0 1.45127px),rgb(9,0,6)"></i>
<i style="background:repeating-linear-gradient(90deg,#000 -0.50291px,#0f0 1.42891px,#0f0 1.43648px),rgb(16,0,8)"></i>
<i style="background:repeating-linear-gradient(90deg,#000 -0.50289px,#0f0 1.41441px,#0f0 1.42192px),rgb(25,0,10)"></i>
<i style="background:repeating-linear-gradient(90deg,#000 -0.50287px,#0f0 1.40012px,#0f0 1.40758px),rgb(36,0,12)"></i>
<i style="background:repeating-linear-gradient(90deg,#000 -0.50284px,#0f0 1.38604px,#0f0 1.39345px),rgb(49,0,14)"></i>
<i style="background:repeating-linear-gradient(90deg,#000 -0.50282px,#0f0 1.37218px,#0f0 1.37953px),rgb(64,0,16)"></i>
<i style="background:repeating-linear-gradient(90deg,#000 -0.50280px,#0f0 1.35851px,#0f0 1.36581px),rgb(81,0,18)"></i>
<i style="background:repeating-linear-gradient(90deg,#000 -0.50278px,#0f0 1.34504px,#0f0 1.35229px),rgb(100,0,20)"></i>
<i style="background:repeating-linear-gradient(90deg,#000 -0.50276px,#0f0 1.33177px,#0f0 1.33896px),rgb(121,0,22)"></i>
<i style="background:repeating-linear-gradient(90deg,#000 -0.50274px,#0f0 1.31869px,#0f0 1.32583px),rgb(144,0,24)"></i>
<i style="background:repeating-linear-gradient(90deg,#000 -0.50272px,#0f0 1.30579px,#0f0 1.31288px),rgb(169,0,26)"></i>
<i style="background:repeating-linear-gradient(90deg,#000 -0.50270px,#0f0 1.29307px,#0f0 1.30011px),rgb(196,0,28)"></i>
<i style="background:repeating-linear-gradient(90deg,#000 -0.50269px,#0f0 1.28053px,#0f0 1.28752px),rgb(225,0,30)"></i>
<i style="background:repeating-linear-gradient(90deg,#000 -0.50267px,#0f0 1.26817px,#0f0 1.27511px),rgb(0,0,32)"></i>
<i style="background:repeating-linear-gradient(90deg,#000 -0.50265px,#0f0 1.25597px,#0f0 1.26287px),rgb(33,0,34)"></i>
<i style="background:repeating-linear-gradient(90deg,#000 -0.50263px,#0f0 1.24395px,#0f0 1.25079px),rgb(68,0,36)"></i>
<i style="background:repeating-linear-gradient(90deg,#000 -0.50261px,#0f0 1.23208px,#0f0 1.23888px),rgb(105,0,38)"></i>
<i style="background:repeating-linear-gradient(90deg,#000 -0.50259px,#0f0 1.22038px,#0f0 1.22714px),rgb(144,0,40)"></i>
<i style="background:repeating-linear-gradient(90deg,#000 -0.50258px,#0f0 1.20883px,#0f0 1.21554px),rgb(185,0,42)"></i>
<i style="background:repeating-linear-gradient(90deg,#000 -0.50256px,#0f0 1.19744px,#0f0 1.20411px),rgb(228,0,44)"></i>
<i style="background:repeating-linear-gradient(90deg,#000 -0.50254px,#0f0 1.18620px,#0f0 1.19282px),rgb(17,0,46)"></i>
<i style="background:repeating-linear-gradient(90deg,#000 -0.50253px,#0f0 1.17511px,#0f0 1.18168px),rgb(64,0,48)"></i>
<i style="background:repeating-linear-gradient(90deg,#000 -0.50251px,#0f0 1.16416px,#0f0 1.17069px),rgb(113,0,50)"></i>
<i style="background:repeating-linear-gradient(90deg,#000 -0.50249px,#0f0 1.15335px,#0f0 1.15984px),rgb(164,0,52)"></i>
<i style="background:repeating-linear-gradient(90deg,#000 -0.50248px,#0f0 1.14268px,#0f0 1.14914px),rgb(217,0,54)"></i>
<i style="background:repeating-linear-gradient(90deg,#000 -0.50246px,#0f0 1.13215px,#0f0 1.13856px),rgb(16,0,56)"></i>
<i style="background:repeating-linear-gradient(90deg,#000 -0.50245px,#0f0 1.12176px,#0f0 1.12813px),rgb(73,0,58)"></i>
<i style="background:repeating-linear-gradient(90deg,#000 -0.50243px,#0f0 1.11149px,#0f0 1.11782px),rgb(132,0,60)"></i>
<i style="background:repeating-linear-gradient(90deg,#000 -0.50242px,#0f0 1.10136px,#0f0 1.10765px),rgb(193,0,62)"></i>
<i style="background:repeating-linear-gradient(90deg,#000 -0.50240px,#0f0 1.09135px,#0f0 1.09760px),rgb(0,0,64)"></i>
<i style="background:repeating-linear-gradient(90deg,#000 -0.50239px,#0f0 1.08147px,#0f0 1.08768px),rgb(65,0,66)"></i>
<i style="background:repeating-linear-gradient(90deg,#000 -0.50237px,#0f0 1.07170px,#0f0 1.07788px),rgb(132,0,68)"></i>
<i style="background:repeating-linear-gradient(90deg,#000 -0.50236px,#0f0 1.06206px,#0f0 1.06820px),rgb(201,0,70)"></i>
<i style="background:repeating-linear-gradient(90deg,#000 -0.50234px,#0f0 1.05254px,#0f0 1.05863px),rgb(16,0,72)"></i>
<i style="background:repeating-linear-gradient(90deg,#000 -0.50233px,#0f0 1.04313px,#0f0 1.04919px),rgb(89,0,74)"></i>
<i style="background:repeating-linear-gradient(90deg,#000 -0.50231px,#0f0 1.03383px,#0f0 1.03986px),rgb(164,0,76)"></i>
<i style="background:repeating-linear-gradient(90deg,#000 -0.50230px,#0f0 1.02465px,#0f0 1.03063px),rgb(241,0,78)"></i>
<i style="background:repeating-linear-gradient(90deg,#000 -0.50229px,#0f0 1.01557px,#0f0 1.02152px),rgb(64,0,80)"></i>
<i style="background:repeating-linear-gradient(90deg,#000 -0.50227px,#0f0 1.00660px,#0f0 1.01252px),rgb(145,0,82)"></i>
<i style="background:repeating-linear-gradient(90deg,#000 -0.50226px,#0f0 0.99774px,#0f0 1.00362px),rgb(228,0,84)"></i>
<i style="background:repeating-linear-gradient(90deg,#000 -0.50225px,#0f0 0.98898px,#0f0 0.99483px),rgb(57,0,86)"></i>
<i style="background:repeating-linear-gradient(90deg,#000 -0.50223px,#0f0 0.98033px,#0f0 0.98614px),rgb(144,0,88)"></i>
<i style="background:repeating-linear-gradient(90deg,#000 -0.50222px,#0f0 0.97177px,#0f0 0.97755px),rgb(233,0,90)"></i>
<i style="background:repeating-linear-gradient(90deg,#000 -0.50221px,#0f0 0.96331px,#0f0 0.96906px),rgb(68,0,92)"></i>
<i style="background:repeating-linear-gradient(90deg,#000 -0.50219px,#0f0 0.95495px,#0f0 0.96066px),rgb(161,0,94)"></i>
<i style="background:repeating-linear-gradient(90deg,#000 -0.50218px,#0f0 0.94668px,#0f0 0.95236px),rgb(0,0,96)"></i>
<i style="background:repeating-linear-gradient(90deg,#000 -0.50217px,#0f0 0.93851px,#0f0 0.94416px),rgb(97,0,98)"></i>
<i style="background:repeating-linear-gradient(90deg,#000 -0.50216px,#0f0 0.93043px,#0f0 0.93604px),rgb(196,0,100)"></i>
<i style="background:repeating-linear-gradient(90deg,#000 -0.50215px,#0f0 0.92244px,#0f0 0.92802px),rgb(41,0,102)"></i>
<i style="background:repeating-linear-gradient(90deg,#000 -0.50213px,#0f0 0.91453px,#0f0 0.92009px),rgb(144,0,104)"></i>
<i style="background:repeating-linear-gradient(90deg,#000 -0.50212px,#0f0 0.90672px,#0f0 0.91224px),rgb(249,0,106)"></i>
<i style="background:repeating-linear-gradient(90deg,#000 -0.50211px,#0f0 0.89899px,#0f0 0.90448px),rgb(100,0,108)"></i>
<i style="background:repeating-linear-gradient(90deg,#000 -0.50210px,#0f0 0.89134px,#0f0 0.89681px),rgb(209,0,110)"></i>
<i style="background:repeating-linear-gradient(90deg,#000 -0.50209px,#0f0 0.88378px,#0f0 0.88922px),rgb(64,0,112)"></i>
<i style="background:repeating-linear-gradient(90deg,#000 -0.50208px,#0f0 0.87630px,#0f0 0.88171px),rgb(177,0,114)"></i>
<i style="background:repeating-linear-gradient(90deg,#000 -0.50206px,#0f0 0.86890px,#0f0 0.87428px),rgb(36,0,116)"></i>
<i style="background:repeating-linear-gradient(90deg,#000 -0.50205px,#0f0 0.86158px,#0f0 0.86693px),rgb(153,0,118)"></i>
<i style="background:repeating-linear-gradient(90deg,#000 -0.50204px,#0f0 0.85434px,#0f0 0.85966px),rgb(16,0,120)"></i>
<i style="background:repeating-linear-gradient(90deg,#000 -0.50203px,#0f0 0.84717px,#0f0 0.85247px),rgb(137,0,122)"></i>
<i style="background:repeating-linear-gradient(90deg,#000 -0.50202px,#0f0 0.84008px,#0f0 0.84535px),rgb(4,0,124)"></i>
<i style="background:repeating-linear-gradient(90deg,#000 -0.50201px,#0f0 0.83307px,#0f0 0.83830px),rgb(129,0,126)"></i>
<i style="background:repeating-linear-gradient(90deg,#000 -0.50200px,#0f0 0.82612px,#0f0 0.83133px),rgb(0,0,128)"></i>
<i style="background:repeating-linear-gradient(90deg,#000 -0.50199px,#0f0 0.81925px,#0f0 0.82444px),rgb(129,0,130)"></i>
<i style="background:repeating-linear-gradient(90deg,#000 -0.50198px,#0f0 0.81245px,#0f0 0.81761px),rgb(4,0,132)"></i>
<i style="background:repeating-linear-gradient(90deg,#000 -0.50197px,#0f0 0.80572px,#0f0 0.81085px),rgb(137,0,134)"></i>
<i style="background:repeating-linear-gradient(90deg,#000 -0.50196px,#0f0 0.79906px,#0f0 0.80416px),rgb(16,0,136)"></i>
<i style="background:repeating-linear-gradient(90deg,#000 -0.50195px,#0f0 0.79247px,#0f0 0.79754px),rgb(153,0,138)"></i>
<i style="background:repeating-linear-gradient(90deg,#000 -0.50194px,#0f0 0.78594px,#0f0 0.79099px),rgb(36,0,140)"></i>
<i style="background:repeating-linear-gradient(90deg,#000 -0.50193px,#0f0 0.77948px,#0f0 0.78450px),rgb(177,0,142)"></i>
<i style="background:repeating-linear-gradient(90deg,#000 -0.50192px,#0f0 0.77308px,#0f0 0.77808px),rgb(64,0,144)"></i>
<i style="background:repeating-linear-gradient(90deg,#000 -0.50191px,#0f0 0.76675px,#0f0 0.77172px),rgb(209,0,146)"></i>
<i style="background:repeating-linear-gradient(90deg,#000 -0.50190px,#0f0 0.76048px,#0f0 0.76543px),rgb(100,0,148)"></i>
<i style="background:repeating-linear-gradient(90deg,#000 -0.50189px,#0f0 0.75427px,#0f0 0.75919px),rgb(249,0,150)"></i>
<i style="background:repeating-linear-gradient(90deg,#000 -0.50188px,#0f0 0.74812px,#0f0 0.75302px),rgb(144,0,152)"></i>
<i style="background:repeating-linear-gradient(90deg,#000 -0.50187px,#0f0 0.74203px,#0f0 0.74691px),rgb(41,0,154)"></i>
<i style="background:repeating-linear-gradient(90deg,#000 -0.50186px,#0f0 0.73600px,#0f0 0.74085px),rgb(196,0,156)"></i>
<i style="background:repeating-linear-gradient(90deg,#000 -0.50186px,#0f0 0.73003px,#0f0 0.73486px),rgb(97,0,158)"></i>
<i style="background:repeating-linear-gradient(90deg,#000 -0.50185px,#0f0 0.72412px,#0f0 0.72892px),rgb(0,0,160)"></i>
<i style="background:repeating-linear-gradient(90deg,#000 -0.50184px,#0f0 0.71826px,#0f0 0.72304px),rgb(161,0,162)"></i>
<i style="background:repeating-linear-gradient(90deg,#000 -0.50183px,#0f0 0.71246px,#0f0 0.71722px),rgb(68,0,164)"></i>
<i style="background:repeating-linear-gradient(90deg,#000 -0.50182px,#0f0 0.70671px,#0f0 0.71145px),rgb(233,0,166)"></i>
<i style="background:repeating-linear-gradient(90deg,#000 -0.50181px,#0f0 0.70102px,#0f0 0.70574px),rgb(144,0,168)"></i>
<i style="background:repeating-linear-gradient(90deg,#000 -0.50180px,#0f0 0.69538px,#0f0 0.70008px),rgb(57,0,170)"></i>
<i style="background:repeating-linear-gradient(90deg,#000 -0.50179px,#0f0 0.68979px,#0f0 0.69447px),rgb(228,0,172)"></i>
<i style="background:repeating-linear-gradient(90deg,#000 -0.50179px,#0f0 0.68426px,#0f0 0.68891px),rgb(145,0,174)"></i>
<i style="background:repeating-linear-gradient(90deg,#000 -0.50178px,#0f0 0.67878px,#0f0 0.68341px),rgb(64,0,176)"></i>
<i style="background:repeating-linear-gradient(90deg,#000 -0.50177px,#0f0 0.67335px,#0f0 0.67795px),rgb(241,0,178)"></i>
<i style="background:repeating-linear-gradient(90deg,#000 -0.50176px,#0f0 0.66796px,#0f0 0.67255px),rgb(164,0,180)"></i>
<i style="background:repeating-linear-gradient(90deg,#000 -0.50175px,#0f0 0.66263px,#0f0 0.66720px),rgb(89,0,182)"></i>
<i style="background:repeating-linear-gradient(90deg,#000 -0.50175px,#0f0 0.65735px,#0f0 0.66189px),rgb(16,0,184)"></i>
<i style="background:repeating-linear-gradient(90deg,#000 -0.50174px,#0f0 0.65211px,#0f0 0.65663px),rgb(201,0,186)"></i>
<i style="background:repeating-linear-gradient(90deg,#000 -0.50173px,#0f0 0.64692px,#0f0 0.65142px),rgb(132,0,188)"></i>
<i style="background:repeating-linear-gradient(90deg,#000 -0.50172px,#0f0 0.64178px,#0f0 0.64626px),rgb(65,0,190)"></i>
<i style="background:repeating-linear-gradient(90deg,#000 -0.50171px,#0f0 0.63668px,#0f0 0.64114px),rgb(0,0,192)"></i>
</div><canvas id="cv" width="640" height="480"></canvas></div>
  <svg width="946" height="60" viewBox="0 0 946 60" fill="none" stroke="#fff" stroke-width="1.4" stroke-linecap="round" stroke-linejoin="round">
    <!-- app icon -->
    <rect x="22" y="19.6" width="13.6" height="13.2" rx="3.4"/>
    <path d="M38.8 23.2 v8.8 a3.6 3.6 0 0 1 -3.6 3.6 h-9.8" stroke-width="1.5"/>
    <path d="M23.2 32 l5.4 -4.6 l5.6 4.8"/>
    <circle cx="31.7" cy="23.4" r="1.35" fill="#fff" stroke="none"/>
    <!-- edit -->
    <path d="M346 20.5 h-6.5 a3 3 0 0 0 -3 3 v10 a3 3 0 0 0 3 3 h3.5"/>
    <path d="M352.5 27 v-3.5 a3 3 0 0 0 -3 -3 h-3.5"/>
    <path d="M337.5 35.5 l6.5 -6.5 l2.5 2.5"/>
    <circle cx="347.5" cy="25" r="1.6"/>
    <path d="M344.1 39 V36.6 L349.8 30.4 L353.3 33.9 L346.9 39 Z" fill="#fff" stroke="#fff" stroke-width="0.4"/>
    <path d="M351.1 29.1 L352.7 27.7 Q353.4 27.2 354.1 27.8 L355 28.8 Q355.5 29.5 355.1 30.2 L354.3 31.7 Z" fill="#fff" stroke="#fff" stroke-width="0.4"/>
    <!-- rotate -->
    <path d="M386.6 29.5 A8.7 8.7 0 1 1 398.8 37.5"/>
    <path d="M398.3 33.5 v4.6 h5"/>
    <circle cx="395.3" cy="29.3" r="1.8"/>
    <!-- delete -->
    <path d="M436.5 23 h18"/>
    <path d="M443.3 22.5 a2.3 1.8 0 0 1 4.6 0"/>
    <path d="M438.3 23.5 l1.8 13.3 a1.6 1.6 0 0 0 1.6 1.3 h7.8 a1.6 1.6 0 0 0 1.6 -1.3 l1.8 -13.3"/>
    <path d="M443.8 27 v7.4 M447.3 27 v7.4"/>
    <!-- more -->
    <circle cx="487.7" cy="29.3" r="2.2" fill="#fff" stroke="none"/>
    <circle cx="495.4" cy="29.3" r="2.2" fill="#fff" stroke="none"/>
    <circle cx="503.2" cy="29.3" r="2.2" fill="#fff" stroke="none"/>
    <!-- zoom out (disabled) -->
    <g stroke="#7a7a7a" stroke-width="1.8">
      <circle cx="581.9" cy="25.8" r="6"/>
      <path d="M578.4 25.8 h7 M586.5 30.4 l5.8 5.8"/>
    </g>
    <!-- zoom in -->
    <g stroke-width="1.8">
      <circle cx="631.9" cy="25.8" r="6"/>
      <path d="M628.4 25.8 h7 M631.9 22.3 v7 M636.5 30.4 l5.8 5.8"/>
    </g>
    <!-- 100% -->
    <g stroke-width="1.65" stroke-linecap="butt">
      <path d="M671 36.9 V24 M671.3 24 L667.3 26.9"/>
      <ellipse cx="678.4" cy="30.4" rx="3.7" ry="5.75"/>
      <ellipse cx="688.4" cy="30.4" rx="3.7" ry="5.75"/>
    </g>
    <g stroke-width="1.3" stroke-linecap="butt">
      <ellipse cx="696" cy="27.4" rx="2.3" ry="2.75"/>
      <ellipse cx="704" cy="33.4" rx="2.3" ry="2.75"/>
      <path d="M695.4 36.5 L704 24.1"/>
    </g>
    <!-- window controls -->
    <g stroke-width="1" stroke-linecap="butt">
      <path d="M802.2 18.5 h12.2" stroke-width="1.1"/>
      <rect x="859.5" y="12.5" width="11" height="11" rx="1.5"/>
      <path d="M916 12.3 l11.7 11.7 M927.7 12.3 l-11.7 11.7" stroke-width="1.25"/>
    </g>
  </svg>
</div>
<script>
(function(){
  var c=document.getElementById('cv');
  var ctx=c.getContext('2d');
  var W=640,H=480;
  var im=ctx.createImageData(W,H);
  var d=im.data;
  for(var y=0;y<H;y++){
    var k=y+1;
    var r=(k*k)&255, b=(2*k)&255;
    for(var x=0;x<W;x++){
      var i=(y*W+x)*4;
      d[i]=r; d[i+1]=((x+1)*k)&255; d[i+2]=b; d[i+3]=255;
    }
  }
  ctx.putImageData(im,0,0);
})();
</script>
</body>
</html>
